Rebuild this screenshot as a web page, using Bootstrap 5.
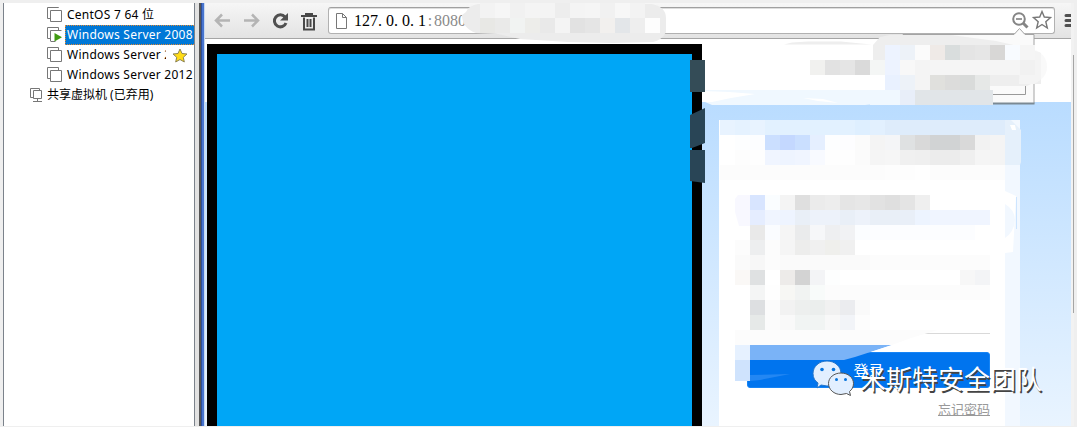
<!DOCTYPE html>
<html lang="zh-CN">
<head>
<meta charset="utf-8">
<title>登录</title>
<link href="https://cdn.jsdelivr.net/npm/bootstrap@5.3.0/dist/css/bootstrap.min.css" rel="stylesheet">
<style>
body{width:1077px;height:427px;overflow:hidden;background:#efefef;font-family:"Noto Sans","Noto Sans CJK SC",sans-serif;font-size:12px;line-height:20px;color:#000}
.frame{height:423px;margin-top:3px}
.tree{width:192px;margin-left:3px;border:solid #7b828b;border-width:0 1px;background:#fff;padding-top:2px}
.vm{height:20px;padding-left:43px}
.vm svg,.shared svg{flex:none}
.vm-name{height:18px;line-height:16px;padding-left:1px;margin-left:3px;margin-top:1px;letter-spacing:.25px;overflow:hidden;white-space:nowrap;border:1px dotted transparent;flex:1}
.vm-name.on{height:20px;margin-top:0;line-height:18px;background:#0078d7;color:#fff;border-color:#e58a31;border-right:0}
.shared{height:20px;padding-left:25px;line-height:19px}
.split{width:10px;background:linear-gradient(90deg,#e2e2e2 0 4px,#555 4px 6px,#2e4f9a 6px 7px,#4774cf 7px 9px,#c8d9ef 9px)}
.view{width:866px}
.bar{height:36px;background:linear-gradient(#f6f6f6,#e3e3e3);border-bottom:1px solid #a5a5a5}
.addr{width:727px;height:27px;margin-left:10px;background:#fff;border:1px solid #b1b1b1;border-top:1px solid #a0a0a0;border-radius:3px;box-shadow:inset 0 1px #ddd}
.url{font:16px/24px "Liberation Serif",serif;white-space:nowrap;margin-left:6px}
.url i{font-style:normal;letter-spacing:4px}
.url i.colon{letter-spacing:1.800px;padding-left:1.800px}
.page-area{height:387px;background:linear-gradient(#fff 0 63px,#b9dcff 63px,#e9f4ff 387px)}
.phone{width:495px;margin:5px 0 0 2px;border:10px solid #000;border-bottom:0;background:#00a6f6}
.login{width:301px;margin:81px 0 0 17px;background:linear-gradient(90deg,#fff 286px,#f2f8ff 286px);padding:213px 30px 0 28px}
.field-line{border-top:1px solid #d9d9d9;height:19px}
.login-btn{width:243px;height:36px;background:#0074ee;color:#fff;border:1px solid #1684f5;border-radius:3px;font-size:15px;padding:0;line-height:34px}
.forgot{font-size:13px;line-height:18px;margin:12px 0 0;color:#999;text-decoration:underline;text-align:right}
.edge{width:3px;background:#f2f2f2}
.edge div{width:1px;height:258px;margin:52px 0 0 2px;background:#a5a5a5}
.over{position:absolute;left:0;top:0;pointer-events:none}
.watermark{font:26px "Noto Sans CJK SC",sans-serif;fill:#fff}
</style>
</head>
<body class="position-relative">
<div class="frame d-flex overflow-hidden">
 <aside class="tree flex-shrink-0">
  <div class="vm d-flex"><svg width="15" height="17" fill="#fff" stroke="#777"><path d="M11.500 3v-.5H.5v11h3M3.500 5.500h11v11h-11z"/></svg><div class="vm-name">CentOS 7 64 位</div></div>
  <div class="vm d-flex"><svg width="15" height="17" fill="#fff" stroke="#777"><path d="M11.500 5.500v-3H.5v11h3M3.500 16V5.500h11M3.500 16.500h5"/><path d="M7.500 8l7.500 4.200-7.500 4.300z" fill="#419b12" stroke="none"/></svg><div class="vm-name on">Windows Server 2008</div></div>
  <div class="vm d-flex"><svg width="15" height="17" fill="#fff" stroke="#777"><path d="M11.500 5.500v-3H.5v11h3M3.500 5.500h11v11h-11z"/></svg><div class="vm-name">Windows Server 2</div><svg width="27" height="20"><path d="M13 4l2 4.500 5 .500-3.700 3.300 1 4.700-4.300-2.500L8.700 17l1-4.700L6 9l5-.5z" fill="#ffdc16" stroke="#8c8355"/></svg></div>
  <div class="vm d-flex"><svg width="15" height="17" fill="#fff" stroke="#777"><path d="M11.500 5.500v-3H.5v11h3M3.500 5.500h11v11h-11z"/></svg><div class="vm-name">Windows Server 2012</div></div>
  <div class="shared d-flex"><svg width="14" height="18" fill="#fff" stroke="#777"><path d="M10.500 5.500v-2h-9v9h3M4.500 5.500h8v8h-8zM8.500 13.500v3M4 16.500h9"/></svg><span class="ms-1">共享虚拟机 (已弃用)</span></div>
 </aside>
 <div class="split flex-shrink-0"></div>
 <main class="view flex-shrink-0">
  <header class="bar d-flex align-items-center">
   <svg width="113" height="34" fill="none"><g stroke="#b4b4b4" stroke-width="2.500"><path d="M25 16.500H12M17 10.500l-6 6 6 6M39 16.500h13M47 10.500l6 6-6 6"/></g><path d="M80 13a6 6 0 1 0 1 6" stroke="#505050" stroke-width="3"/><path d="M83 9v7.500h-8z" fill="#505050"/><path d="M96 12h16M101 12v-2h6v2M99 13.500v12h10v-12M102.500 15v8M105.500 15v8" stroke="#484848" stroke-width="2"/></svg>
   <div class="addr d-flex align-items-center">
    <svg width="19" height="24" class="flex-shrink-0"><path d="M7.500 4.500h6l4 4v11h-10zM13.500 4.500v4h4" fill="#fff" stroke="#777"/></svg>
    <div class="url">127<i>.</i>0<i>.</i>0<i>.</i>1<span style="color:#8a8a8a"><i class="colon">:</i>8080</span></div>
    <svg class="ms-auto" width="43" height="25" fill="none"><circle cx="8" cy="11" r="5.800" stroke="#858585" stroke-width="2"/><path d="M5 11h6" stroke="#777" stroke-width="1.500"/><path d="M12 15l4.500 4.500" stroke="#858585" stroke-width="3"/><path d="M31 3.500l2.300 5.500 6.200.500-4.700 4.200 1.500 6.300-5.300-3.500-5.300 3.500 1.500-6.300-4.700-4.200 6.200-.5z" stroke="#777" stroke-width="1.400"/></svg>
   </div>
   <svg width="16" height="34"><path d="M11 11.500h6M11 16.500h6M11 21.500h6" stroke="#505050" stroke-width="3" stroke-linecap="round"/></svg>
  </header>
  <div class="page-area d-flex">
   <div class="phone flex-shrink-0"></div>
   <section class="login flex-shrink-0">
    <div class="field-line"></div>
    <button class="btn login-btn d-block">登录</button>
    <div class="forgot">忘记密码</div>
   </section>
  </div>
 </main>
 <div class="edge flex-shrink-0"><div></div></div>
</div>

<!-- zoom bubble and the masked-out areas, above the page -->
<svg class="over" width="1077" height="427">
 <path d="M903 34.500h111l5.500-6 5.500 6h9v69h-131z" fill="#fafafa" stroke="#a4a4a4"/>
 <path d="M993 103.500h41.500" stroke="#7b8993" stroke-width="2"/>
 <path d="M980 94.500h45.500v-20" fill="none" stroke="#999"/>
 <text x="989" y="85" font-size="12" fill="#444">设置</text>
 <path d="M784 44.500l8-2 16-1h33l20 2 11 1zM873 45l7-8 10-2h61l45 6 27 6 10 3 8 3v31h-10l-4 2H873z" fill="#eee"/>
 <path d="M1020 48l12 1c10 3 15 9 15 18 0 8-5 13-13 17h-15z" fill="#f6f6f6" fill-opacity=".7"/>
 <path d="M705 90h180v13l-20 2H712l-7-3z" fill="#f0f8ff"/><path d="M702 91l27 1 26 2-24 4-19 4-10 0zM803 98l20 1 15 4-20-2z" fill="#fff"/>
 <path d="M990 90h3v15h-3z" fill="#e1e5e8"/>
 <path d="M466 12q2-6 12-8H652q14 3 14 14v14q-4 8-13 10l-40 1-45-1-48-3-22-5-22-1q-14-5-14-18z" fill="#ececec"/>
 <path d="M735 330h203l-27 8-19 7H735z" fill="#fcfcfc"/>
 <g id="blocks" shape-rendering="crispEdges"></g>
 <path d="M1005 120l6 0 5 5 5 5v32l-1 3h-15z" fill="#e5f0fb"/><path d="M1010 125h5l1 5h-4z" fill="#fff"/>
 <path d="M1005 191l11 5-3 56-8 1z" fill="#fff"/><path d="M1005 204q10 6 10 16-1 12-10 18z" fill="#f2f8ff"/><path d="M1016.500 197v32" stroke="#cde5ff"/>
 <path d="M735 199l3-4h12v31h-11l-4-14z" fill="#f8f8ff"/>
 <path d="M750 345h142l-37 12-11 3h-94z" fill="#7ab3f7"/><path d="M871 352l21-7v7z" fill="#fff"/>
 <path d="M750 375l40-1-30 6-10 1v-6z" fill="#2387f3"/>
 <path d="M735 345h15v15h-15z" fill="#e6f1ff"/><path d="M735 360h15v21h-15z" fill="#cfe3fd"/>
 <path d="M690 60h15v32h-15zM690 115l15-7v35l-13 5h-2zM690 150h15v33l-15-2z" fill="#294556"/><path d="M690 60h15v32h-15z" fill="#344c57"/>
</svg>
<svg class="over" width="1077" height="427">
 <g stroke="#555" stroke-width="1"><path d="M827 361c8 0 14 5.500 14 12.500s-6 12.500-14 12.500l-6-1-4 3 1-5c-3-2-5-5-5-9.500 0-7 6-12.500 14-12.500z" fill="#e2efff" stroke="#2475ca"/><path d="M841 373c7 0 12.500 4.500 12.500 10.500 0 3.500-1.500 6-4 8l1 4-4-2-5.500 1c-7 0-12.500-5-12.500-11s5.500-10.500 12.500-10.500z" fill="#e2efff"/></g>
 <g fill="#0874dc"><circle cx="822" cy="369.500" r="1.800"/><circle cx="833.500" cy="369.500" r="1.800"/><circle cx="836.500" cy="379.500" r="1.500"/><circle cx="845.500" cy="379.500" r="1.500"/></g>
 <g class="watermark"><text x="861.500" y="390.500" style="fill:#444">米斯特安全团队</text><text x="860" y="389">米斯特安全团队</text></g>
</svg>
<script>
// each row: left, top, one colour per 15px cell; "-" leaves the page visible
const rows=[
[480,3,'f3f3f3 f6f6f6 f1f1f1 f4f4f4 f4f4f4 ededed f4f4f4 f5f5f5 f1f1f1 f7f7f7 f3f3f3'],
[480,18,'e8e8e5 eaeae9 f1f3f2 ededea e9e9e9 f4f4f4 e2e2e2 e5e5e5 f2f0ee e3e6e9 eeeeee fdfdfd'],
[885,45,'edf3ff edf2f8 fbfbfb efeae7 d9dddd e4e4e4 e6e6e6 d8d7d6 f8fbff f5f5f5'],
[810,60,'f1f1ef e2e2e2 e5e5e5 dadada f4f6f5 edf3ff f8f8f8 f4f4f4 f5f5f5 f5f5f5 f5f5f5 f5f5f5 f5f5f5 f5f5f5 f1f1f1'],
[870,75,'ffffff e9f1ff edf2f8 f4f4f4 e0e0dd dcdcdb d9dbda e6e8e7 - - -'],
[870,90,'f0f8ff f0f8ff e8eef9 e1e5e8 e1e5e8 e1e5e8 e1e5e8 e1e5e8'],
[720,120,'e8f3ff e5f2ff e8f3ff e2f1ff e2f1ff e2f1ff e2f1ff e2f1ff e2f1ff deefff e2f0fe deecfb deecfb deecfb deecfb deecfb deecfb deecfb deecfb'],
[720,135,'ffffff fdfeff fcfdff cbdfff c4d8ff cadfff e5efff fdfeff fdfdff fbfbfb f4f4f4 f4f5f7 dfe1e2 d9d9d9 d1d3d4 d1d3d4 d9d9d9 f2f2f2 f4f4f4'],
[720,150,'ffffff fdfdfd fefefe f0f5ff eef4ff f0f5ff f8faff fefefe fefefe fbfbfb f5f5f5 f6f6f6 f0f0f0 efefef ececec ececec efefef f5f5f5 f4f4f4'],
[720,165,'fcfcfc fcfcfc fcfcfc fcfcfc fcfcfc fcfcfc fcfcfc fcfcfc fcfcfc fcfcfc fcfcfc fdfdfd fdfdfd fefefe fcfcfc fcfcfc fcfcfc fcfcfc fcfcfc'],
[750,195,'d8e5ff fafdff f4f4f4 dfdfdf ebebeb ededed e5e5e5 e7e7e7 e2e2e2 dfdfdf e4e4e4 efefef'],
[750,210,'e5edff f0f5ff eef4ff e9eff7 edf2fa edf2fa e9eff7 edf2fa e9eff7 e9eff7 e9eff8 edf4ff f0f5ff f0f5ff f0f5ff f0f5ff'],
[750,225,'e9e9e9 fafcff f5f5f5 eaebec f6f7f9 eeeff1 f1f2f4 fbfdff fcfdff fcfdff fcfdff fcfdff fcfdff fcfdff fcfdff'],
[735,240,'fcfcfc edeeef fcfcfc f5f5f5 ededec f0f0f0 efefec f0f0f0'],
[735,255,'fafafa f7f7f7 fcfcfc fafafa fafafa fafafa fafafa fafafa fafafa fcfcfc fcfcfc fcfcfc fcfcfc fcfcfc fcfcfc fcfcfc fcfcfc'],
[735,270,'faf8f6 dfe1e2 ffffff edebe9 d3d3d3 f3f4f6 fdfefe ffffff ffffff ffffff ffffff ffffff ffffff ffffff ffffff f7f7f7 f3f4f6'],
[750,285,'f4f5f5 fefefe f7f7f4 f1f3f2 f8fbfa fcfcfc fcfcfc fcfcfc fcfcfc fcfcfc fcfcfc fcfcfc fcfcfc fcfcfc fcfcfc fcfcfc'],
[750,300,'dddfe1 fbfbfb f2f2f2 edefee ebeeed f1f1f1 ebecef fafafa'],
[750,315,'e6e9e8 fbfbfb f9f9f9 f1f4f3 f1f4f3 f8f8f8 f2f4f8 fdfdfd']];
const host=document.getElementById('blocks');
for(const [x,y,list] of rows)list.split(' ').forEach((c,i)=>{
 if(c==='-')return;
 const r=document.createElementNS('http://www.w3.org/2000/svg','rect');
 r.setAttribute('x',x+i*15);r.setAttribute('y',y);r.setAttribute('width',15);r.setAttribute('height',15);r.setAttribute('fill','#'+c);host.append(r);
});
</script>
<script src="https://cdn.jsdelivr.net/npm/bootstrap@5.3.0/dist/js/bootstrap.bundle.min.js"></script>
</body>
</html>
